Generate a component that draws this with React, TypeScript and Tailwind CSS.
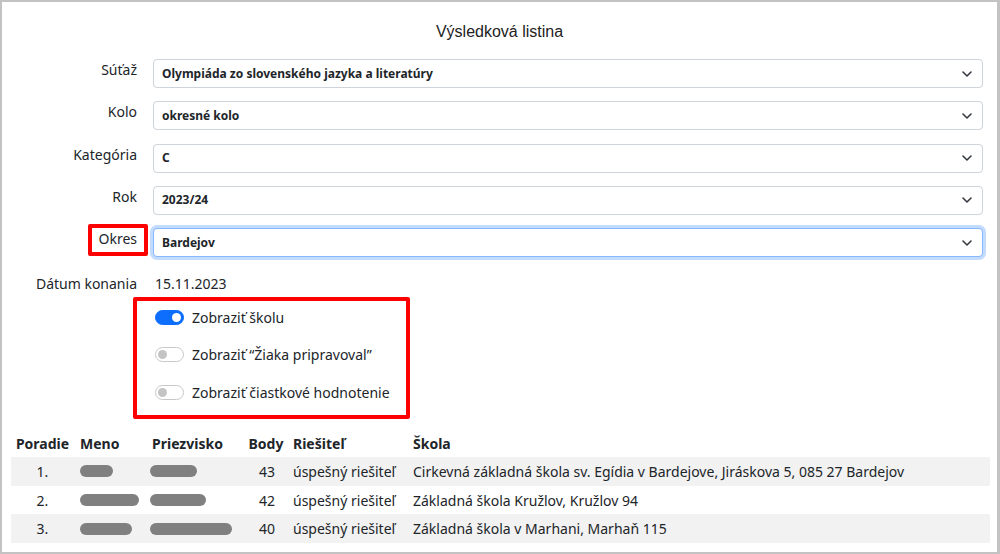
import { useState } from "react";

const FONT = "font-['Noto_Sans','Open_Sans',sans-serif]";

type Row = {
  rank: string;
  meno: number;
  priezvisko: number;
  body: number;
  riesitel: string;
  skola: string;
};

const ROWS: Row[] = [
  { rank: "1.", meno: 33, priezvisko: 47, body: 43, riesitel: "úspešný riešiteľ", skola: "Cirkevná základná škola sv. Egídia v Bardejove, Jiráskova 5, 085 27 Bardejov" },
  { rank: "2.", meno: 59, priezvisko: 56, body: 42, riesitel: "úspešný riešiteľ", skola: "Základná škola Kružlov, Kružlov 94" },
  { rank: "3.", meno: 52, priezvisko: 82, body: 40, riesitel: "úspešný riešiteľ", skola: "Základná škola v Marhani, Marhaň 115" },
];

function Chevron() {
  return (
    <svg width="10" height="6" viewBox="0 0 10 6" className="shrink-0">
      <polyline points="1,1 5,5 9,1" fill="none" stroke="#343a40" strokeWidth="1.6" strokeLinecap="round" strokeLinejoin="round" />
    </svg>
  );
}

function SelectBox({ value, focused }: { value: string; focused?: boolean }) {
  return (
    <div
      className={`flex h-[29px] flex-1 items-center justify-between rounded-[4px] border bg-white pl-[8px] pr-[10px] ${
        focused ? "border-[#86b7fe] shadow-[0_0_0_3px_rgba(13,110,253,0.25)]" : "border-[#ced4da]"
      }`}
    >
      <span className="text-[12px] font-bold text-[#212529]">{value}</span>
      <Chevron />
    </div>
  );
}

function FormRow({ label, value, focused, marked }: { label: string; value: string; focused?: boolean; marked?: boolean }) {
  return (
    <div className="flex items-start gap-[16px]">
      <div className="w-[135px] pt-[1px] text-right text-[14px] leading-[20px] text-[#212529]">
        <span className="relative">
          {label}
          {marked && (
            <span className="pointer-events-none absolute -left-[10px] -right-[11px] -top-[5px] -bottom-[8px] rounded-[2px] border-[4px] border-[#ff0000]" />
          )}
        </span>
      </div>
      <SelectBox value={value} focused={focused} />
    </div>
  );
}

function Toggle({ on, label }: { on: boolean; label: string }) {
  return (
    <div className="flex h-[20px] items-center gap-[8px]">
      <span
        className={`flex h-[15px] w-[29px] items-center rounded-full border px-[2px] ${
          on ? "justify-end border-[#0d6efd] bg-[#0d6efd]" : "justify-start border-[#c8c8c8] bg-white"
        }`}
      >
        <span className={`h-[9px] w-[9px] rounded-full ${on ? "bg-white" : "bg-[#c4c4c4]"}`} />
      </span>
      <span className="text-[14px] text-[#212529]">{label}</span>
    </div>
  );
}

export default function App() {
  const [toggles] = useState([true, false, false]);
  return (
    <div className={`h-[554px] w-[1000px] overflow-hidden border-2 border-r-[3px] border-[#c3c3c3] bg-white text-[#212529] ${FONT}`}>
      <h1 className="pt-[20px] text-center font-['Liberation_Sans',Arial,sans-serif] text-[16px] leading-[20px] text-[#222]">
        Výsledková listina
      </h1>

      <div className="mt-[17px] flex flex-col gap-[13.25px] pr-[14px]">
        <FormRow label="Súťaž" value="Olympiáda zo slovenského jazyka a literatúry" />
        <FormRow label="Kolo" value="okresné kolo" />
        <FormRow label="Kategória" value="C" />
        <FormRow label="Rok" value="2023/24" />
        <FormRow label="Okres" value="Bardejov" focused marked />
      </div>

      <div className="mt-[17px] flex items-center gap-[18px] text-[14px] leading-[20px]">
        <div className="w-[135px] text-right">Dátum konania</div>
        <div>15.11.2023</div>
      </div>

      <div className="ml-[131px] mt-[3px] flex w-[277px] flex-col gap-[17.5px] rounded-[2px] border-[4px] border-[#ff0000] pb-[13px] pl-[18px] pt-[6px]">
        <Toggle on={toggles[0]} label="Zobraziť školu" />
        <Toggle on={toggles[1]} label="Zobraziť “Žiaka pripravoval”" />
        <Toggle on={toggles[2]} label="Zobraziť čiastkové hodnotenie" />
      </div>

      <table className="ml-[9px] mt-[11px] w-[979px] border-collapse text-[14px]">
        <thead>
          <tr className="h-[27px] text-left font-bold">
            <th className="w-[63px] text-center">Poradie</th>
            <th className="w-[72px] px-[6px]">Meno</th>
            <th className="w-[97px] px-[6px]">Priezvisko</th>
            <th className="w-[44px] pl-[2px] text-center">Body</th>
            <th className="w-[120px] px-[6px]">Riešiteľ</th>
            <th className="px-[6px]">Škola</th>
          </tr>
        </thead>
        <tbody>
          {ROWS.map((r, i) => (
            <tr key={r.rank} className={`h-[28.7px] ${i % 2 === 0 ? "bg-[#f2f2f2]" : "bg-white"}`}>
              <td className="text-center">{r.rank}</td>
              <td className="px-[6px]">
                <span className="block h-[12px] rounded-full bg-[#808080]" style={{ width: r.meno }} />
              </td>
              <td className="px-[4px]">
                <span className="block h-[12px] rounded-full bg-[#808080]" style={{ width: r.priezvisko }} />
              </td>
              <td className="pr-[12px] text-right">{r.body}</td>
              <td className="px-[6px]">{r.riesitel}</td>
              <td className="px-[6px]">{r.skola}</td>
            </tr>
          ))}
        </tbody>
      </table>
    </div>
  );
}
